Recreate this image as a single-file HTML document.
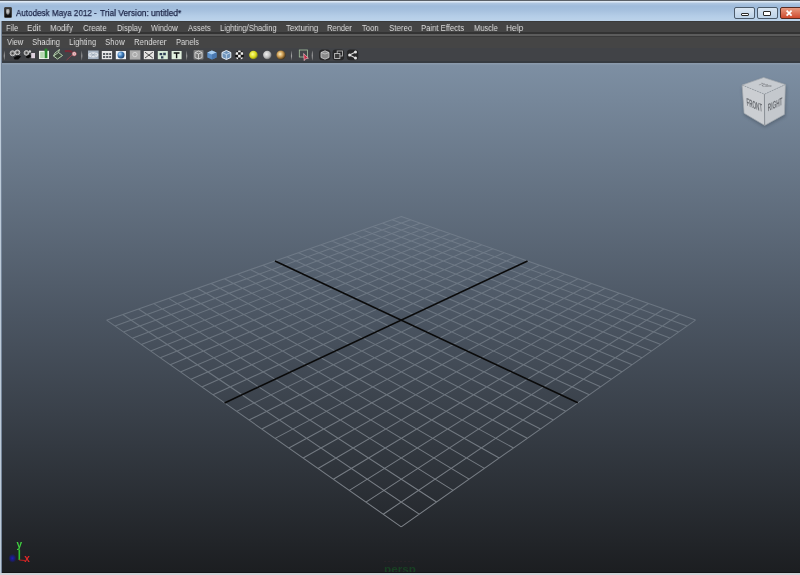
<!DOCTYPE html>
<html><head><meta charset="utf-8"><style>
*{margin:0;padding:0;box-sizing:border-box}
html,body{width:800px;height:575px;overflow:hidden;background:#444}
body{position:relative;font-family:"Liberation Sans",sans-serif}
.abs{position:absolute}
.t{will-change:transform;position:absolute;font-size:9.5px;line-height:10px;color:#dcdcdc;white-space:nowrap;transform:scaleX(0.84);transform-origin:0 0}
#title{left:0;top:0;width:800px;height:21px;background:linear-gradient(#5a6068 0,#5a6068 1px,#e4edf6 1px,#d6e3f1 2px,#adc5e0 3.5px,#9fbbdb 6px,#a5c0de 10px,#b4cde7 16px,#bcd3ea 21px)}
.tt{top:7.5px;color:#1a2244;font-size:9.5px;-webkit-text-stroke:0.25px #1a2244}
#viewport{left:2px;top:62.6px;width:798px;height:509.4px;background:linear-gradient(#8a9aac 0,#8a9aac 1.2px,#7d8fa3 1.8px,#4b5562 50%,#1c1e21 100%)}
</style></head><body><div id="wrap" style="position:absolute;left:0;top:0;width:800px;height:575px;filter:blur(0.35px)">
<div id="title" class="abs">
  <div class="abs" style="left:3.5px;top:7px;width:8.5px;height:10.8px;background:linear-gradient(#3a3a3a,#1a1a1a 70%,#0a0a0a);border-radius:1px;border:0.5px solid #444"></div><div class="abs" style="left:5.5px;top:8.5px;width:4.5px;height:6px;background:radial-gradient(ellipse at 45% 40%,#d8d8d8 0,#9a9a9a 45%,rgba(80,80,80,0) 75%)"></div>
  <div class="t tt" style="left:16px;transform:scaleX(0.85)">Autodesk Maya 2012</div><div class="t tt" style="left:94px;transform:scaleX(0.85)">-</div><div class="t tt" style="left:99.8px;transform:scaleX(0.883)">Trial Version: untitled*</div>
  <div class="abs" style="left:733.5px;top:6.5px;width:21px;height:12px;border:1px solid #4c5b6c;border-radius:2px;background:linear-gradient(#dae6f3,#bcd2e8)"><div class="abs" style="left:6px;top:5px;width:8.5px;height:3.5px;background:#fff;border:1px solid #2a2a2a;border-radius:1px"></div></div>
  <div class="abs" style="left:756.5px;top:6.5px;width:21px;height:12px;border:1px solid #4c5b6c;border-radius:2px;background:linear-gradient(#dae6f3,#bcd2e8)"><div class="abs" style="left:5.8px;top:3px;width:7.5px;height:5.5px;background:#fff;border:1.2px solid #2a2a2a;border-top-width:1.8px;border-radius:1px"></div></div>
  <div class="abs" style="left:779.5px;top:6.5px;width:22px;height:12px;border:1px solid #5a2a20;border-radius:2px;background:linear-gradient(#e89a80,#cf4a2e)"></div>
</div>
<div class="abs" style="left:2px;top:21px;width:798px;height:1px;background:#3a3a3a"></div>
<div class="abs" style="left:2px;top:22px;width:798px;height:10px;background:#444"></div>
<div class="abs" style="left:2px;top:32px;width:798px;height:1.5px;background:#333"></div>
<div class="abs" style="left:2px;top:33.5px;width:798px;height:2px;background:#5c5c5c"></div>
<div class="abs" style="left:2px;top:35.5px;width:798px;height:1px;background:#3a3a3a"></div>
<div class="abs" style="left:2px;top:36.5px;width:798px;height:11.5px;background:#454545"></div>
<div class="abs" style="left:2px;top:47.8px;width:798px;height:13.6px;background:#414347"></div>
<div class="abs" style="left:2px;top:61.4px;width:798px;height:1.2px;background:#363b41"></div>
<span class="t" style="left:5.9px;top:22.5px;transform:scaleX(0.8)">File</span><span class="t" style="left:27.0px;top:22.5px;transform:scaleX(0.84)">Edit</span><span class="t" style="left:50.1px;top:22.5px;transform:scaleX(0.82)">Modify</span><span class="t" style="left:83.1px;top:22.5px;transform:scaleX(0.83)">Create</span><span class="t" style="left:116.6px;top:22.5px;transform:scaleX(0.79)">Display</span><span class="t" style="left:151.4px;top:22.5px;transform:scaleX(0.785)">Window</span><span class="t" style="left:188.0px;top:22.5px;transform:scaleX(0.8)">Assets</span><span class="t" style="left:220.4px;top:22.5px;transform:scaleX(0.8)">Lighting/Shading</span><span class="t" style="left:286.0px;top:22.5px;transform:scaleX(0.835)">Texturing</span><span class="t" style="left:327.4px;top:22.5px;transform:scaleX(0.795)">Render</span><span class="t" style="left:362.4px;top:22.5px;transform:scaleX(0.81)">Toon</span><span class="t" style="left:388.6px;top:22.5px;transform:scaleX(0.83)">Stereo</span><span class="t" style="left:421.2px;top:22.5px;transform:scaleX(0.81)">Paint Effects</span><span class="t" style="left:474.0px;top:22.5px;transform:scaleX(0.79)">Muscle</span><span class="t" style="left:506.0px;top:22.5px;transform:scaleX(0.88)">Help</span>
<span class="t" style="left:6.9px;top:36.7px;transform:scaleX(0.79)">View</span><span class="t" style="left:32.2px;top:36.7px;transform:scaleX(0.805)">Shading</span><span class="t" style="left:69.2px;top:36.7px;transform:scaleX(0.82)">Lighting</span><span class="t" style="left:105.3px;top:36.7px;transform:scaleX(0.82)">Show</span><span class="t" style="left:134.0px;top:36.7px;transform:scaleX(0.815)">Renderer</span><span class="t" style="left:175.8px;top:36.7px;transform:scaleX(0.79)">Panels</span>
<div class="abs" style="left:0;top:21px;width:1px;height:554px;background:#bccad8"></div>
<div class="abs" style="left:1px;top:21px;width:1px;height:554px;background:#76869a"></div>
<div id="viewport" class="abs"></div>
<svg class="abs" style="left:0;top:0" width="800" height="575" viewBox="0 0 800 575">
<defs>
<radialGradient id="gblue" cx="0.35" cy="0.35" r="0.7"><stop offset="0" stop-color="#bfe0ff"/><stop offset="0.5" stop-color="#3f7fbf"/><stop offset="1" stop-color="#1d3f6a"/></radialGradient>
<radialGradient id="gyel" cx="0.4" cy="0.4" r="0.65"><stop offset="0" stop-color="#ffff90"/><stop offset="0.6" stop-color="#d8d818"/><stop offset="1" stop-color="#6a6a20"/></radialGradient>
<radialGradient id="ggray" cx="0.4" cy="0.4" r="0.65"><stop offset="0" stop-color="#f0f0f0"/><stop offset="0.6" stop-color="#c0c0c0"/><stop offset="1" stop-color="#707070"/></radialGradient>
<radialGradient id="ggold" cx="0.4" cy="0.4" r="0.65"><stop offset="0" stop-color="#fff0c0"/><stop offset="0.5" stop-color="#c89850"/><stop offset="1" stop-color="#3a2a10"/></radialGradient>
<radialGradient id="gzb"><stop offset="0" stop-color="#1e1ec0" stop-opacity="0.95"/><stop offset="0.55" stop-color="#1a1aa0" stop-opacity="0.6"/><stop offset="1" stop-color="#1a1a80" stop-opacity="0"/></radialGradient>
<linearGradient id="gl" gradientUnits="userSpaceOnUse" x1="0" y1="217" x2="0" y2="527"><stop offset="0" stop-color="rgb(140,150,162)" stop-opacity="0.4"/><stop offset="0.35" stop-color="rgb(132,142,152)" stop-opacity="0.55"/><stop offset="1" stop-color="rgb(150,155,162)" stop-opacity="0.78"/></linearGradient>
<filter id="fbl" x="-30%" y="-30%" width="160%" height="160%"><feGaussianBlur stdDeviation="1.8"/></filter>
</defs>
<path d="M786.6 10.6 L791.6 15.6 M791.6 10.6 L786.6 15.6" stroke="#fff" stroke-width="1.7"/>

<g fill="#a8a8a8" opacity="0.9">
<path d="M4.3 50.5 Q3.2 55.5 4.3 60.5 Q5.4 55.5 4.3 50.5Z"/>
<path d="M81.8 50.5 Q80.7 55.5 81.8 60.5 Q82.9 55.5 81.8 50.5Z"/>
<path d="M186.7 50.5 Q185.6 55.5 186.7 60.5 Q187.8 55.5 186.7 50.5Z"/>
<path d="M291.5 50.5 Q290.4 55.5 291.5 60.5 Q292.6 55.5 291.5 50.5Z"/>
<path d="M312.3 50.5 Q311.2 55.5 312.3 60.5 Q313.4 55.5 312.3 50.5Z"/>
</g>
<!-- A cameras -->
<circle cx="12.6" cy="53.3" r="2.5" fill="#8c8c8c" stroke="#c4c4c4" stroke-width="1"/>
<circle cx="12.6" cy="53.3" r="0.9" fill="#3a3a3a"/>
<circle cx="17.4" cy="52.4" r="2.4" fill="#8c8c8c" stroke="#cccccc" stroke-width="1"/>
<circle cx="17.4" cy="52.4" r="0.9" fill="#3a3a3a"/>
<path d="M13.6 57.8 L17.8 55.2 L21.2 56.6 L18.2 59.6 L14.6 59.6Z" fill="#0a0a0a"/>
<circle cx="26.4" cy="52.9" r="2.3" fill="#8c8c8c" stroke="#c8c8c8" stroke-width="1"/>
<circle cx="26.4" cy="52.9" r="0.8" fill="#3a3a3a"/>
<circle cx="29.9" cy="51.5" r="1.2" fill="#cfcfcf"/>
<path d="M25.8 56.6 L29.6 54.6 L31.2 56.2 L28.6 58.2 L26.6 58Z" fill="#0a0a0a"/>
<rect x="31.2" y="53" width="3.8" height="5.2" fill="#ded2de"/>
<!-- C green bars -->
<rect x="39" y="50.8" width="10" height="8.2" fill="#eef4ec"/>
<rect x="40.2" y="52" width="3.6" height="6" fill="#b4d8ae"/>
<rect x="44.6" y="48.6" width="2.8" height="9.6" fill="#2a8a2e"/>
<!-- D wireframe box -->
<path d="M53.5 56 L57.5 59 L62.5 55.5 L58.5 52.5Z M58.5 52.5 L59.5 49.5 M53.5 56 L55 53 L59.5 49.5" fill="#3c4a3c" stroke="#c0dcb8" stroke-width="0.9"/>
<!-- E red -->
<path d="M64.8 51.3 Q68 50.5 72 51.8" stroke="#8a2030" stroke-width="2.2" fill="none" opacity="0.75"/>
<path d="M66.6 60 L72.6 54.6" stroke="#b04050" stroke-width="0.9" opacity="0.8"/>
<circle cx="74.2" cy="53.9" r="2.1" fill="#f2dada" stroke="#b84858" stroke-width="0.6"/>
<circle cx="74.2" cy="53.9" r="0.6" fill="#a05060"/>
<!-- F grid plane -->
<rect x="88" y="50.5" width="10.6" height="8.6" fill="#a8b4c2"/>
<ellipse cx="93.3" cy="54.8" rx="5" ry="2.6" fill="#dfe3e8"/>
<path d="M89.5 54.8 H97 M91 53 L95.5 56.6 M95.5 53 L91 56.6" stroke="#8e9cac" stroke-width="0.6"/>
<!-- G grid dots -->
<rect x="101.8" y="51" width="10.3" height="8.2" fill="#e8e8e8"/>
<path d="M103 53.2h2.2v1.6h-2.2z M106.1 53.2h2.2v1.6h-2.2z M109.2 53.2h1.9v1.6h-1.9z M103 56.2h2.2v1.6h-2.2z M106.1 56.2h2.2v1.6h-2.2z M109.2 56.2h1.9v1.6h-1.9z" fill="#2a3038"/>
<!-- H blue sphere -->
<rect x="115.8" y="51" width="10.2" height="8.2" fill="#eef2f6"/>
<circle cx="121" cy="55" r="3.5" fill="url(#gblue)"/>
<!-- I gray -->
<rect x="129.8" y="50.3" width="10.6" height="9.3" fill="#acacac"/>
<circle cx="134.9" cy="54.6" r="2.2" fill="none" stroke="#d6d6d6" stroke-width="1"/>
<!-- J X -->
<rect x="143.8" y="51" width="10.2" height="8.2" fill="#e6e4e2"/>
<path d="M145 52.2 L152.8 58 M152.8 52.2 L145 58" stroke="#3a3a3a" stroke-width="0.9"/>
<!-- K green blue -->
<rect x="157.8" y="51" width="10" height="8.2" fill="#d8ecd8"/>
<path d="M159.6 53 h2.6 v2.2 h-2.6z M163.2 52.8 h2.6 v2.4 h-2.6z M161 56.2 h2.4 v2.2 h-2.4z" fill="#2c3c52"/>
<!-- L T -->
<rect x="171.6" y="51" width="10" height="8.2" fill="#e2f0de"/>
<path d="M173.7 52.3 h5.8 v1.4 h-2.2 v4.6 h-1.4 v-4.6 h-2.2z" fill="#111"/>
<!-- M wire cube gray -->
<rect x="193.5" y="50" width="10" height="9.6" rx="1" fill="#7a7a7a"/>
<path d="M195 52.5 L198.5 51 L202 52.5 L202 57.5 L198.5 59 L195 57.5Z M195 52.5 L198.5 54 L202 52.5 M198.5 54 V59" fill="none" stroke="#d8d8d8" stroke-width="0.9"/>
<!-- N blue cube -->
<path d="M207.3 52.5 L211.9 50.5 L216.5 52.5 L216.5 57.5 L211.9 59.5 L207.3 57.5Z" fill="#5a8ec8"/>
<path d="M207.3 52.5 L211.9 50.5 L216.5 52.5 L211.9 54.5Z" fill="#a8cdf0"/>
<path d="M211.9 54.5 L216.5 52.5 L216.5 57.5 L211.9 59.5Z" fill="#4a78b0"/>
<!-- O wire cube blue -->
<path d="M222 52.5 L226.4 50.5 L230.8 52.5 L230.8 57.5 L226.4 59.5 L222 57.5Z" fill="#6f94bb" stroke="#e8f0f8" stroke-width="1"/>
<path d="M222 52.5 L226.4 54.5 L230.8 52.5 M226.4 54.5 V59.5" fill="none" stroke="#dde8f4" stroke-width="0.7"/>
<!-- P checker sphere -->
<clipPath id="cpk"><circle cx="239.5" cy="55" r="4.5"/></clipPath>
<g clip-path="url(#cpk)">
<rect x="235" y="50.5" width="9" height="9" fill="#151515"/>
<path d="M235.5 52.2h2.6v2.6h-2.6z M240.7 52.2h2.6v2.6h-2.6z M238.1 54.8h2.6v2.6h-2.6z M235.5 57.4h2.6v2.6h-2.6z M240.7 57.4h2.6v2.6h-2.6z M238.1 49.6h2.6v2.6h-2.6z" fill="#f0f0f0"/>
</g>
<!-- Q yellow -->
<circle cx="253.5" cy="55" r="4.3" fill="url(#gyel)"/>
<!-- R gray sphere -->
<circle cx="267.3" cy="55" r="4.2" fill="url(#ggray)"/>
<!-- S gold -->
<circle cx="281" cy="55" r="4.6" fill="url(#ggold)"/>
<!-- T select -->
<rect x="299.3" y="50" width="8.2" height="7" fill="none" stroke="#a8c4a0" stroke-width="0.8"/>
<path d="M303.6 53.5 L308.4 58.2 L305.6 58.8 L304.2 60.6Z" fill="#c82c48" stroke="#f4d0d8" stroke-width="0.6"/>
<!-- U gray cube -->
<rect x="319" y="49.5" width="11.5" height="10.8" rx="3.5" fill="#202020" opacity="0.8"/>
<path d="M321 52.5 L325 50.8 L329 52.5 L329 57.5 L325 59.2 L321 57.5Z" fill="#8a8a8a" stroke="#d0d0d0" stroke-width="0.8"/>
<path d="M321 52.5 L325 54 L329 52.5" fill="none" stroke="#d8d8d8" stroke-width="0.6"/>
<!-- V two squares -->
<rect x="332.6" y="49.5" width="11.5" height="10.8" rx="3" fill="#202020" opacity="0.8"/>
<rect x="337.2" y="51" width="5.3" height="5" fill="none" stroke="#b0b0b0" stroke-width="0.9"/>
<rect x="334.6" y="53.5" width="5.3" height="5" fill="#3a3a3a" stroke="#c0c0c0" stroke-width="0.9"/>
<!-- W share -->
<rect x="346.8" y="49.5" width="11.5" height="10.8" rx="3.5" fill="#202020" opacity="0.8"/>
<path d="M349.6 55 L355.5 51.9 M349.6 55 L355.5 58.1" stroke="#d4d4d4" stroke-width="1.1"/>
<circle cx="349.6" cy="55" r="1.5" fill="#e2e2e2"/>
<circle cx="355.5" cy="51.9" r="1.5" fill="#e2e2e2"/>
<circle cx="355.5" cy="58.1" r="1.5" fill="#e2e2e2"/>

<path d="M401.32 216.54L106.58 320.16M401.32 216.54L695.55 320.12M410.63 219.82L114.90 326.00M392.01 219.82L687.25 325.95M420.13 223.16L123.45 332.00M382.51 223.16L678.71 331.94M429.83 226.58L132.25 338.17M372.79 226.57L669.93 338.11M439.75 230.07L141.31 344.52M362.87 230.06L660.89 344.46M449.88 233.64L150.64 351.07M352.73 233.62L651.58 350.99M460.24 237.28L160.25 357.81M342.37 237.27L641.99 357.73M470.83 241.01L170.16 364.76M331.77 240.99L632.11 364.67M481.66 244.82L180.37 371.92M320.93 244.80L621.91 371.83M492.73 248.72L190.90 379.31M309.84 248.70L611.40 379.21M504.06 252.71L201.78 386.93M298.50 252.69L600.54 386.84M515.66 256.79L213.00 394.81M286.89 256.77L589.33 394.71M539.69 265.25L236.59 411.35M262.82 265.23L565.78 411.25M552.14 269.63L248.99 420.05M250.35 269.62L553.39 419.95M564.89 274.13L261.82 429.05M237.57 274.11L540.57 428.96M577.97 278.73L275.11 438.37M224.47 278.72L527.29 438.28M591.37 283.45L288.88 448.03M211.04 283.44L513.53 447.94M605.12 288.28L303.16 458.04M197.26 288.28L499.27 457.96M619.21 293.25L317.97 468.43M183.13 293.25L484.46 468.36M633.68 298.34L333.34 479.22M168.62 298.35L469.09 479.15M648.53 303.57L349.32 490.42M153.73 303.58L453.11 490.37M663.78 308.94L365.93 502.07M138.44 308.96L436.50 502.04M679.45 314.45L383.21 514.20M122.73 314.48L419.22 514.18M695.55 320.12L401.21 526.82M106.58 320.16L401.21 526.82" stroke="url(#gl)" stroke-width="1.05" fill="none"/>
<path d="M527.53 260.97L224.60 402.94M275.00 260.95L577.75 402.84" stroke="#0a0a0a" stroke-width="1.6" fill="none"/>

<g>
<path d="M763.7 79 L786.4 86 L785.4 116.4 L764.7 127.4 L744.1 115.3 L742.1 87Z" fill="#3c4856" opacity="0.45" filter="url(#fbl)"/>
<path d="M763.7 77.5 L785.4 84.6 L764.4 94.2 L742.1 85.1Z" fill="#c7cbd0"/>
<path d="M742.1 85.1 L764.4 94.2 L764.7 125.4 L744.1 113.3Z" fill="#cbced2"/>
<path d="M764.4 94.2 L785.4 84.6 L784.4 114.4 L764.7 125.4Z" fill="#c4c8cd"/>
<path d="M763.7 77.5 L785.4 84.6 L784.4 114.4 L764.7 125.4 L744.1 113.3 L742.1 85.1Z" fill="none" stroke="#a2a7ad" stroke-width="0.7"/>
<path d="M742.1 85.1 L764.4 94.2 L785.4 84.6" fill="none" stroke="#8d9298" stroke-width="0.7" stroke-dasharray="1.6 1.1"/>
<path d="M764.4 94.2 L764.7 125.4" stroke="#7d8186" stroke-width="0.7"/>
<g transform="matrix(0.224,0.092,0.021,0.312,742.1,85.1)"><text x="50" y="61" font-size="36" font-weight="bold" text-anchor="middle" textLength="70" lengthAdjust="spacingAndGlyphs" fill="#6a6d72" font-family="Liberation Sans">FRONT</text></g>
<g transform="matrix(0.21,-0.096,0.003,0.298,764.4,94.2)"><text x="50" y="63" font-size="36" font-weight="bold" text-anchor="middle" textLength="70" lengthAdjust="spacingAndGlyphs" fill="#6a6d72" font-family="Liberation Sans">RIGHT</text></g>
<g transform="matrix(0.217,0.071,-0.223,0.091,763.7,77.5)"><text x="52" y="55" font-size="30" font-weight="bold" text-anchor="middle" textLength="50" lengthAdjust="spacingAndGlyphs" fill="#85888d" font-family="Liberation Sans">TOP</text></g>
</g>


<path d="M19.3 549.5 V560" stroke="#30c030" stroke-width="1.6"/>
<path d="M19.2 560 L25 560.5" stroke="#c02020" stroke-width="1.2"/>
<ellipse cx="12.4" cy="558.3" rx="4.2" ry="4.6" fill="url(#gzb)"/>
<text x="16.6" y="548" font-size="10" font-weight="bold" fill="#40d040" font-family="Liberation Sans">y</text>
<text x="24.3" y="561.8" font-size="10" font-weight="bold" fill="#e02828" font-family="Liberation Sans">x</text>
<clipPath id="cpb"><rect x="0" y="540" width="800" height="32"/></clipPath><g clip-path="url(#cpb)"><text x="384" y="572.5" font-size="11" font-weight="bold" fill="#175a26" opacity="0.55" textLength="32" lengthAdjust="spacingAndGlyphs" font-family="Liberation Sans">persp</text></g><path d="M384 561.5 H416" stroke="#4a2a30" stroke-width="1.2" stroke-dasharray="2 2" opacity="0.25"/>

</svg>
<div class="abs" style="left:2px;top:571.5px;width:798px;height:1.5px;background:#141516"></div>
<div class="abs" style="left:0;top:573px;width:800px;height:2px;background:#cfd3d8"></div>
</div></body></html>
